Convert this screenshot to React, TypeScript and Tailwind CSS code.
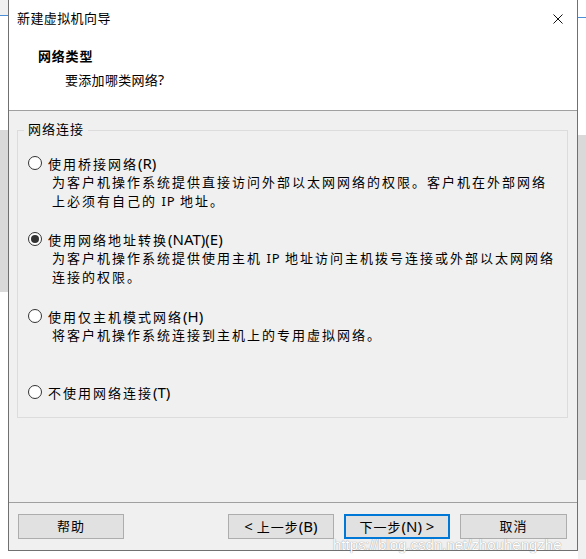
import React from "react";

const CJK = /[\u3000-\u303f\u3400-\u9fff\uff00-\uffef]/;

function T({ text, cjk, latin = "tracking-normal" }: { text: string; cjk: string; latin?: string }) {
  const parts: { s: string; c: boolean }[] = [];
  for (const ch of text) {
    const c = CJK.test(ch);
    const last = parts[parts.length - 1];
    if (last && last.c === c) last.s += ch;
    else parts.push({ s: ch, c });
  }
  return (
    <span className="whitespace-pre">
      {parts.map((p, i) => (
        <span key={i} className={p.c ? cjk : latin}>
          {p.s}
        </span>
      ))}
    </span>
  );
}

function Radio({ checked }: { checked?: boolean }) {
  return (
    <span className="w-[14px] h-[14px] rounded-full border border-[#333333] bg-white flex items-center justify-center shrink-0">
      {checked && <span className="w-[8px] h-[8px] rounded-full bg-[#333333]" />}
    </span>
  );
}

function Option({
  label,
  desc,
  checked,
  mt,
}: {
  label: string;
  desc: string[];
  checked?: boolean;
  mt: string;
}) {
  return (
    <div className={mt}>
      <div className="h-[20px] flex items-center">
        <Radio checked={checked} />
        <span className="ml-[6px]">
          <T text={label} cjk="tracking-[2px]" latin="tracking-normal text-[15px]" />
        </span>
      </div>
      {desc.map((d, i) => (
        <div key={i} className="h-[19px] flex items-center pl-[24px]">
          <T text={d} cjk="tracking-[2px]" latin="tracking-[1px] text-[13px]" />
        </div>
      ))}
    </div>
  );
}

function Btn({ label, primary, w }: { label: string; primary?: boolean; w: string }) {
  return (
    <div
      className={`${w} h-[25px] flex items-center justify-center bg-[#e1e1e1] ${
        primary ? "border-2 border-[#0078d7]" : "border border-[#adadad]"
      }`}
    >
      <T text={label} cjk="tracking-[1px]" latin="tracking-normal text-[15px]" />
    </div>
  );
}

export default function App() {
  return (
    <div className="relative w-[586px] h-[559px] bg-white flex font-['Noto_Sans','Noto_Sans_CJK_SC',sans-serif] text-[13px] text-black overflow-hidden">
      {/* left desktop strip */}
      <div className="w-[8px] flex flex-col">
        <div className="h-[15px] bg-[#f0f0f0]" />
        <div className="h-[1px] bg-[#4d8fd6]" />
        <div className="h-[114px] bg-white" />
        <div className="h-[162px] bg-[#d9d9d9]" />
        <div className="flex-1 bg-white" />
      </div>

      {/* window */}
      <div className="w-[570px] h-[551px] border-x border-b border-[#707070] flex flex-col">
        {/* header */}
        <div className="h-[111px] bg-white border-b border-[#a0a0a0] flex flex-col">
          <div className="h-[38px] flex items-center justify-between pl-[8px] pr-[14px]">
            <T text="新建虚拟机向导" cjk="tracking-[0.4px]" />
            <svg width="10" height="10" viewBox="0 0 10 10">
              <path d="M0.5 0.5 L9.5 9.5 M9.5 0.5 L0.5 9.5" stroke="#111" strokeWidth="1" />
            </svg>
          </div>
          <div className="mt-[10px] h-[18px] flex items-center pl-[29px] font-bold">
            <T text="网络类型" cjk="tracking-[0.8px]" />
          </div>
          <div className="mt-[5px] h-[18px] flex items-center pl-[56px]">
            <T text="要添加哪类网络?" cjk="tracking-[0.3px]" latin="tracking-normal text-[14px]" />
          </div>
        </div>

        {/* body */}
        <div className="h-[391px] bg-[#f0f0f0] pl-[8px] pr-[9px] pt-[19px]">
          <div className="relative h-[288px] border border-[#dcdcdc] pl-[10px] pt-[22px]">
            <div className="absolute top-[-10px] left-[6px] px-[4px] bg-[#f0f0f0] h-[18px] flex items-center">
              <T text="网络连接" cjk="tracking-[1px]" />
            </div>
            <Option
              mt="mt-0"
              label="使用桥接网络(R)"
              desc={[
                "为客户机操作系统提供直接访问外部以太网网络的权限。客户机在外部网络",
                "上必须有自己的 IP 地址。",
              ]}
            />
            <Option
              mt="mt-[18px]"
              checked
              label="使用网络地址转换(NAT)(E)"
              desc={[
                "为客户机操作系统提供使用主机 IP 地址访问主机拨号连接或外部以太网网络",
                "连接的权限。",
              ]}
            />
            <Option
              mt="mt-[19px]"
              label="使用仅主机模式网络(H)"
              desc={["将客户机操作系统连接到主机上的专用虚拟网络。"]}
            />
            <Option mt="mt-[37px]" label="不使用网络连接(T)" desc={[]} />
          </div>
        </div>

        {/* footer */}
        <div className="h-[48px] bg-[#f0f0f0] border-t border-[#a0a0a0] pt-[11px] pl-[9px] pr-[10px] flex items-start">
          <Btn label="帮助" w="w-[106px]" />
          <div className="flex-1" />
          <div className="flex gap-[10px]">
            <Btn label="< 上一步(B)" w="w-[106px]" />
            <Btn label="下一步(N) >" w="w-[106px]" primary />
            <Btn label="取消" w="w-[107px]" />
          </div>
        </div>
      </div>

      {/* right desktop strip */}
      <div className="w-[8px] flex flex-col">
        <div className="h-[17px] bg-white" />
        <div className="h-[1px] bg-[#4d8fd6]" />
        <div className="h-[117px] bg-white" />
        <div className="h-[345px] bg-[#d9d9d9]" />
        <div className="flex-1 bg-[#f0f0f0]" />
      </div>

      {/* watermark */}
      <div className="absolute left-[333px] top-[535px] text-[15px] leading-[20px] font-['Liberation_Sans',sans-serif] text-white [text-shadow:0_0_1px_rgba(100,100,100,0.9)] whitespace-nowrap">
        https://blog.csdn.net/zhouhengzhe
      </div>
    </div>
  );
}
